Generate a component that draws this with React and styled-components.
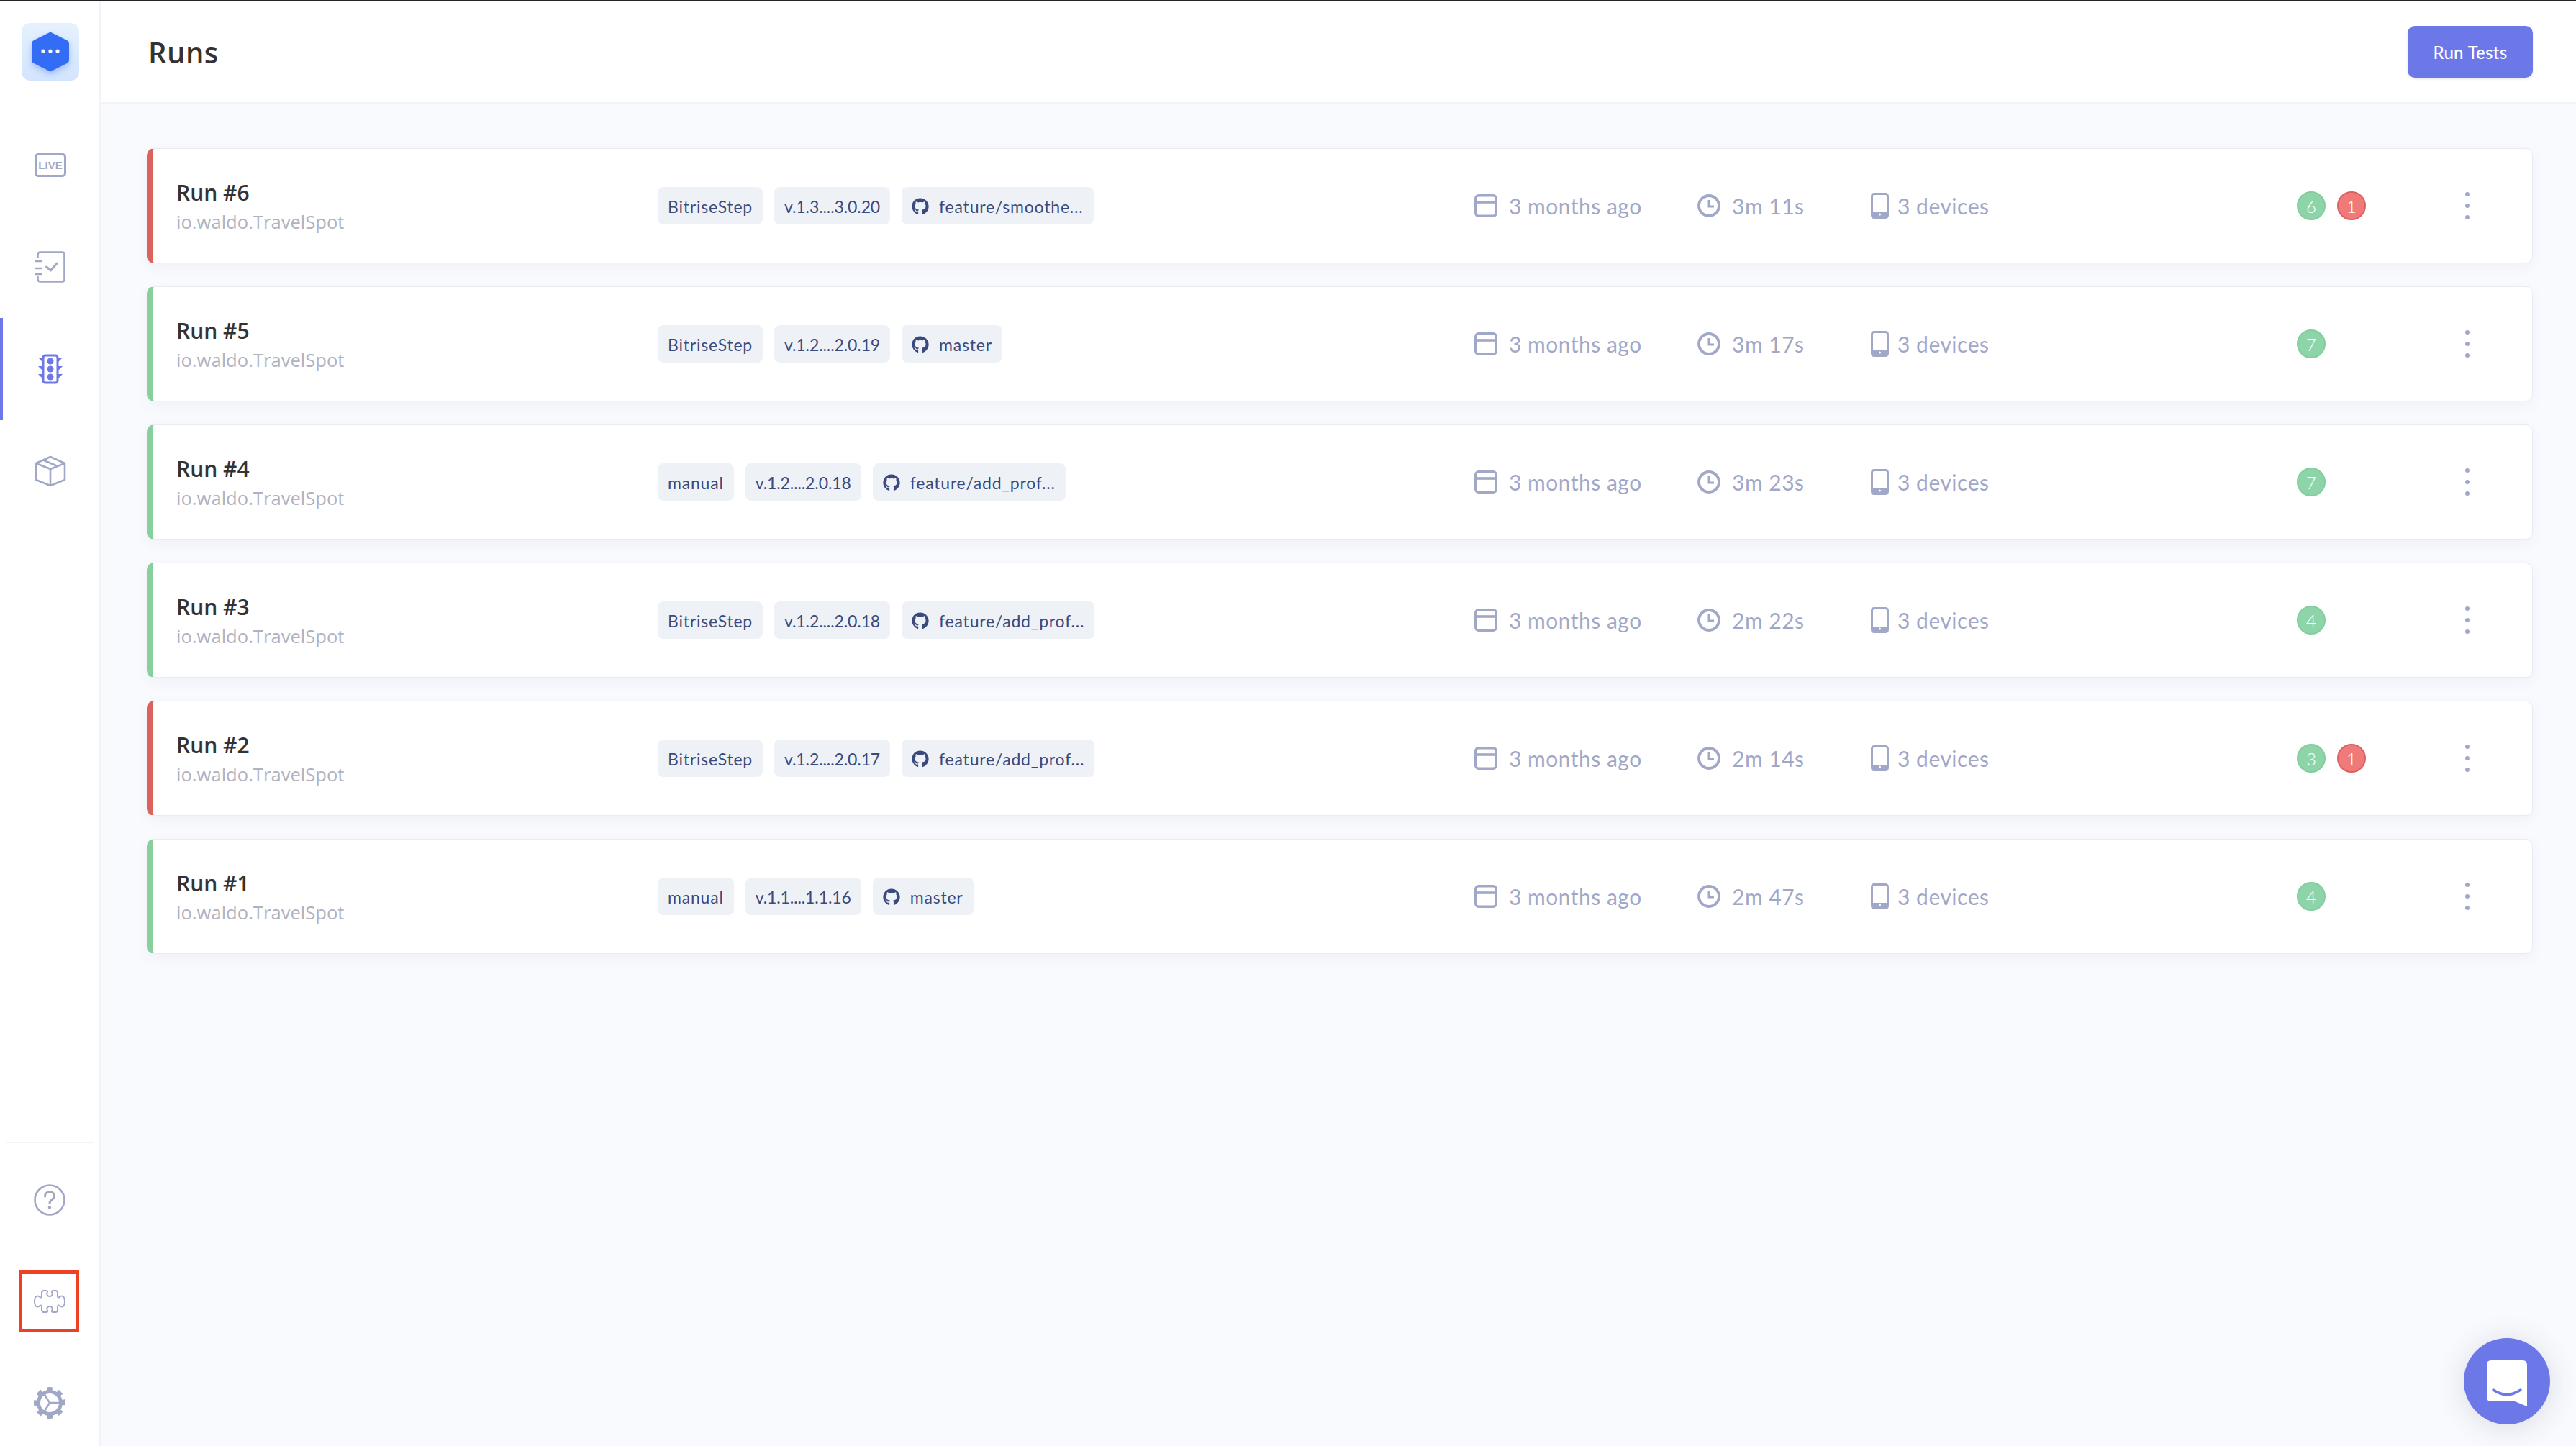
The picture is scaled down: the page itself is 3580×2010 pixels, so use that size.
import styled, { createGlobalStyle } from "styled-components";
import { FaGithub } from "react-icons/fa";

const runs = [
    { id: 6, failed: true, source: "BitriseStep", version: "v.1.3....3.0.20", branch: "feature/smoothe...", time: "3m 11s", pass: 6, fail: 1 },
    { id: 5, source: "BitriseStep", version: "v.1.2....2.0.19", branch: "master", time: "3m 17s", pass: 7 },
    { id: 4, source: "manual", version: "v.1.2....2.0.18", branch: "feature/add_prof...", time: "3m 23s", pass: 7 },
    { id: 3, source: "BitriseStep", version: "v.1.2....2.0.18", branch: "feature/add_prof...", time: "2m 22s", pass: 4 },
    { id: 2, failed: true, source: "BitriseStep", version: "v.1.2....2.0.17", branch: "feature/add_prof...", time: "2m 14s", pass: 3, fail: 1 },
    { id: 1, source: "manual", version: "v.1.1....1.1.16", branch: "master", time: "2m 47s", pass: 4 },
];

function ChecklistIcon() {
    return (
        <svg width="42" height="44" viewBox="0 0 42 44" fill="none" stroke="currentColor" strokeWidth="2.6" strokeLinecap="round" strokeLinejoin="round">
            <path d="M3.500 9V5q0-3.500 3.500-3.500h30.500q3 0 3 3V39q0 3.500-3 3.500H7q-3.500 0-3.500-3.500v-3" />
            <path d="M1 14h7M1 24h7M1 32h7" />
            <path d="M15.500 22l6 5 8.500-10" strokeWidth="3" />
        </svg>
    );
}

function TrafficIcon({ color }) {
    return (
        <svg width="34" height="42" viewBox="0 0 34 42" fill="none" color={color}>
            <rect x="7" y="2" width="20" height="38" rx="3" stroke="currentColor" strokeWidth="3" />
            <circle cx="17" cy="10" r="4.500" fill="currentColor" />
            <circle cx="17" cy="21" r="4.500" fill="currentColor" />
            <circle cx="17" cy="32" r="4.500" fill="currentColor" />
            <path d="M0 5h7v7zM34 5h-7v7zM0 17h7v7zM34 17h-7v7zM0 28h7v7zM34 28h-7v7z" fill="currentColor" />
        </svg>
    );
}

function BoxIcon() {
    return (
        <svg width="44" height="44" viewBox="0 0 44 44" fill="none" stroke="currentColor" strokeWidth="2.6" strokeLinejoin="round">
            <path d="M2 11L22 2l20 9v23l-20 8-20-8z" />
            <path d="M2 11l20 8 20-8M22 19v23M12 6.500l20 8.500" />
        </svg>
    );
}

function HelpIcon() {
    return (
        <svg width="44" height="44" viewBox="0 0 44 44" fill="none" stroke="currentColor" strokeWidth="2.6" strokeLinecap="round">
            <circle cx="22" cy="22" r="20.500" />
            <path d="M15.500 17c0-4 3-6.500 6.500-6.500s6.500 2.500 6.500 6c0 5-6.500 5-6.500 10" strokeWidth="3" />
            <circle cx="22" cy="32.500" r="2.200" fill="currentColor" stroke="none" />
        </svg>
    );
}

function PuzzleIcon() {
    return (
        <svg width="44" height="34" viewBox="0 0 44 34" fill="none" stroke="currentColor" strokeWidth="2" strokeLinejoin="round">
            <path d="M14 2h3c2.500 0 2.500 1.500 1.600 3-1.200 2.500.4 5 3.400 5s4.600-2.500 3.400-5c-.9-1.500-.9-3 1.600-3h3c2 0 3 1 3 3v5c0 1.500 1.500 2 2.500 1 1-1 2-1.500 3.500-1.500 2.500 0 4 3.500 4 7.500s-1.500 7.500-4 7.500c-1.500 0-2.500-.5-3.500-1.500-1-1-2.500-.5-2.500 1v5c0 2-1 3-3 3h-3c-2.500 0-2.500-1.500-1.600-3 1.200-2.500-.4-5-3.400-5s-4.600 2.500-3.400 5c.9 1.500.9 3-1.600 3h-3c-2 0-3-1-3-3v-5c0-1.500-1.500-2-2.500-1-1 1-2 1.500-3.500 1.500-2.500 0-4-3.500-4-7.500s1.500-7.500 4-7.500c1.500 0 2.500.5 3.500 1.500 1 1 2.500.5 2.500-1V5c0-2 1-3 3-3z" />
        </svg>
    );
}

function GearIcon() {
    return (
        <svg width="44" height="44" viewBox="0 0 44 44" fill="none" stroke="currentColor">
            <circle cx="22" cy="22" r="15.500" strokeWidth="5" />
            <circle cx="22" cy="22" r="19" strokeWidth="6" strokeDasharray="7.400 7.520" transform="rotate(-13 22 22)" />
            <path d="M22 22h15M22 22l-8-13M22 22l-8 13" strokeWidth="2.400" />
        </svg>
    );
}

function CalendarIcon() {
    return (
        <svg width="32" height="32" viewBox="0 0 32 32" fill="none" stroke="currentColor" strokeWidth="3.600">
            <rect x="1.800" y="1.800" width="28.400" height="28.400" rx="4" />
            <path d="M2 11h28" />
        </svg>
    );
}

function ClockIcon() {
    return (
        <svg width="32" height="32" viewBox="0 0 32 32" fill="none" stroke="currentColor">
            <circle cx="16" cy="16" r="14" strokeWidth="3.800" />
            <path d="M16 8v9h7" strokeWidth="3" />
        </svg>
    );
}

function PhoneIcon() {
    return (
        <svg width="25" height="36" viewBox="0 0 25 36" fill="none">
            <rect x="1.500" y="1.500" width="22" height="33" rx="3" stroke="currentColor" strokeWidth="3" />
            <path d="M2 27h21v6H2z" fill="currentColor" />
            <circle cx="12.500" cy="30" r="1.600" fill="#fff" />
        </svg>
    );
}

export default function App() {
    return (
        <Page>
            <GlobalStyle />
            <Sidebar>
                <LogoTile>
                    <svg width="52" height="58" viewBox="0 0 52 58">
                        <path d="M26 1.500L49 13q3 1.500 3 5v22q0 3.500-3 5L26 56.500 3 45q-3-1.500-3-5V18q0-3.500 3-5z" fill="#336cf5" />
                        <circle cx="16" cy="28" r="2.600" fill="#fff" />
                        <circle cx="26" cy="28" r="2.600" fill="#fff" />
                        <circle cx="36" cy="28" r="2.600" fill="#fff" />
                    </svg>
                </LogoTile>
                <Nav>
                    <NavItem><LiveIcon>LIVE</LiveIcon></NavItem>
                    <NavItem><ChecklistIcon /></NavItem>
                    <NavItem $active><TrafficIcon color="#6c78e8" /></NavItem>
                    <NavItem><BoxIcon /></NavItem>
                </Nav>
                <BottomNav>
                    <BottomItem><HelpIcon /></BottomItem>
                    <BottomItem>
                        <Highlight><PuzzleIcon /></Highlight>
                    </BottomItem>
                    <BottomItem><GearIcon /></BottomItem>
                </BottomNav>
            </Sidebar>

            <Main>
                <Header>
                    <Title>Runs</Title>
                    <RunButton>Run Tests</RunButton>
                </Header>
                <List>
                    {runs.map((run) => (
                        <Card key={run.id} $failed={run.failed}>
                            <Info>
                                <RunName>Run #{run.id}</RunName>
                                <AppName>io.waldo.TravelSpot</AppName>
                            </Info>
                            <Chips>
                                <Chip>{run.source}</Chip>
                                <Chip $tight>{run.version}</Chip>
                                <Chip><FaGithub size={24} />{run.branch}</Chip>
                            </Chips>
                            <Meta $width={310}><CalendarIcon />3 months ago</Meta>
                            <Meta $width={241}><ClockIcon />{run.time}</Meta>
                            <Meta $width={592} $gap={12}><PhoneIcon />3 devices</Meta>
                            <Badges>
                                <Badge>{run.pass}</Badge>
                                {run.fail && <Badge $red>{run.fail}</Badge>}
                            </Badges>
                            <Dots><i /><i /><i /></Dots>
                        </Card>
                    ))}
                </List>
            </Main>

            <Fab>
                <svg width="56" height="64" viewBox="0 0 56 64">
                    <path d="M6 0h44q6 0 6 6v58l-17-7H6q-6 0-6-6V6q0-6 6-6z" fill="#fff" />
                    <path d="M9 41q19 13 38 0" fill="none" stroke="#6c78e8" strokeWidth="3.500" strokeLinecap="round" />
                </svg>
            </Fab>
        </Page>
    );
}

const GlobalStyle = createGlobalStyle`
    html, body {
        margin: 0;
        padding: 0;
        background: #f9fafe;
        font-family: "Lato", "Liberation Sans", sans-serif;
    }
`;

const Page = styled.div`
    width: 3580px;
    height: 2010px;
    box-sizing: border-box;
    border-top: 2px solid #222326;
    display: flex;
    overflow: hidden;
    position: relative;
`;

const Sidebar = styled.aside`
    width: 140px;
    flex-shrink: 0;
    box-sizing: border-box;
    background: #fff;
    border-right: 2px solid #f2f3f8;
    display: flex;
    flex-direction: column;
    color: #a1a7c7;
`;

const LogoTile = styled.div`
    width: 80px;
    height: 80px;
    margin: 30px 0 0 30px;
    border-radius: 12px;
    background: linear-gradient(180deg, #e6f1fe, #d3e5fd);
    display: flex;
    align-items: center;
    justify-content: center;

    svg {
        filter: drop-shadow(0 4px 5px rgba(51, 108, 245, 0.35));
    }
`;

const Nav = styled.nav`
    margin-top: 46px;
    display: flex;
    flex-direction: column;
`;

const NavItem = styled.div`
    height: 142px;
    box-sizing: border-box;
    display: flex;
    align-items: center;
    justify-content: center;
    padding-right: 2px;
    border-left: 4px solid ${(p) => (p.$active ? "#6c78e8" : "transparent")};
`;

const LiveIcon = styled.div`
    width: 44px;
    height: 33px;
    box-sizing: border-box;
    border: 3px solid currentColor;
    border-radius: 5px;
    font-family: "Liberation Sans", sans-serif;
    font-size: 15px;
    font-weight: 700;
    line-height: 27px;
    text-align: center;
`;

const BottomNav = styled.div`
    margin: auto 8px 0;
    padding-top: 19px;
    border-top: 2px solid #f2f3f5;
    display: flex;
    flex-direction: column;
    gap: 21px;
`;

const BottomItem = styled.div`
    height: 120px;
    display: flex;
    align-items: center;
    justify-content: center;
`;

const Highlight = styled.div`
    width: 84px;
    height: 86px;
    box-sizing: border-box;
    border: 5px solid #ee4123;
    margin-left: -2px;
    padding-left: 2px;
    display: flex;
    align-items: center;
    justify-content: center;
`;

const Main = styled.main`
    flex: 1;
    min-width: 0;
`;

const Header = styled.header`
    height: 142px;
    box-sizing: border-box;
    background: #fff;
    border-bottom: 2px solid #f1f3f8;
    padding: 0 60px 0 66px;
    display: flex;
    align-items: center;
    justify-content: space-between;
`;

const Title = styled.h1`
    margin: 0;
    font-family: "Open Sans", sans-serif;
    font-size: 40px;
    font-weight: 600;
    letter-spacing: 0.5px;
    color: #333;
`;

const RunButton = styled.button`
    width: 174px;
    height: 72px;
    border: none;
    border-radius: 10px;
    background: #6c78e8;
    box-shadow: 0 2px 3px rgba(60, 60, 110, 0.12);
    color: #fff;
    font-family: inherit;
    font-size: 24px;
    font-weight: 500;
    letter-spacing: 0.3px;
    padding: 0;
`;

const List = styled.div`
    padding: 62px 60px 0 64px;
    display: flex;
    flex-direction: column;
    gap: 32px;
`;

const Card = styled.section`
    height: 160px;
    box-sizing: border-box;
    border-radius: 10px;
    background: #fff;
    border: 1px solid #e9ebf1;
    border-left: 8px solid ${(p) => (p.$failed ? "#dd615d" : "#88cf9d")};
    box-shadow: 0 6px 18px rgba(70, 75, 120, 0.05);
    display: flex;
    align-items: center;
`;

const Info = styled.div`
    width: 668px;
    padding: 2px 0 0 34px;
    flex-shrink: 0;
`;

const RunName = styled.div`
    font-family: "Open Sans", sans-serif;
    font-size: 30px;
    font-weight: 600;
    line-height: 40px;
    margin-left: -1px;
    color: #333;
`;

const AppName = styled.div`
    font-family: "Open Sans", sans-serif;
    font-size: 25.6px;
    font-weight: 400;
    line-height: 36px;
    margin: 3px 0 0 -1px;
    color: #b0b2bf;
`;

const Chips = styled.div`
    width: 1135px;
    flex-shrink: 0;
    display: flex;
    gap: 16px;
`;

const Chip = styled.span`
    height: 52px;
    box-sizing: border-box;
    padding: 2px 14px 0;
    border-radius: 8px;
    background: #eef1f6;
    color: #3a4a7d;
    font-size: 23px;
    letter-spacing: ${(p) => (p.$tight ? "-0.1px" : "0.8px")};
    display: flex;
    align-items: center;
    gap: 14px;
`;

const Meta = styled.div`
    width: ${(p) => p.$width}px;
    flex-shrink: 0;
    display: flex;
    align-items: center;
    gap: ${(p) => p.$gap || 16}px;
    color: #a1a7c7;
    font-size: 30px;
    letter-spacing: 0.5px;
`;

const Badges = styled.div`
    width: 234px;
    flex-shrink: 0;
    display: flex;
    gap: 16px;
`;

const Badge = styled.span`
    width: 40px;
    height: 40px;
    box-sizing: border-box;
    border-radius: 50%;
    background: ${(p) => (p.$red ? "#f07a7a" : "#8dd5a8")};
    border: 2px solid ${(p) => (p.$red ? "#dc6060" : "#84cd9f")};
    color: #fff;
    font-size: 24px;
    font-weight: 300;
    display: flex;
    align-items: center;
    justify-content: center;
`;

const Dots = styled.div`
    display: flex;
    flex-direction: column;
    gap: 10px;

    i {
        width: 6px;
        height: 6px;
        border-radius: 50%;
        background: #a1a7c7;
    }
`;

const Fab = styled.div`
    position: absolute;
    right: 36px;
    bottom: 30px;
    width: 120px;
    height: 120px;
    border-radius: 50%;
    background: #6c78e8;
    box-shadow: 0 4px 40px rgba(60, 60, 90, 0.16);
    display: flex;
    align-items: center;
    justify-content: center;
    padding-top: 6px;
    box-sizing: border-box;
`;
